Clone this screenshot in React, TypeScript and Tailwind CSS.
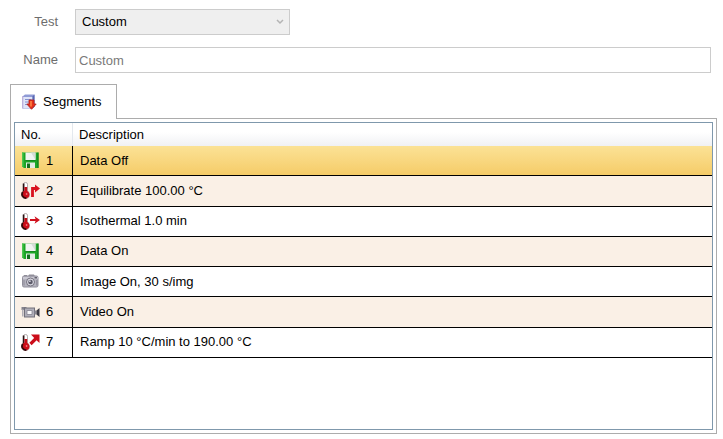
import { useState } from "react";

// ────────────────────────────────────────────
// Types
// ────────────────────────────────────────────

type SegmentKind =
  | "data"
  | "equilibrate"
  | "isothermal"
  | "image"
  | "video"
  | "ramp";

interface Segment {
  kind: SegmentKind;
  description: string;
}

const SEGMENTS: Segment[] = [
  { kind: "data", description: "Data Off" },
  { kind: "equilibrate", description: "Equilibrate 100.00 °C" },
  { kind: "isothermal", description: "Isothermal 1.0 min" },
  { kind: "data", description: "Data On" },
  { kind: "image", description: "Image On, 30 s/img" },
  { kind: "video", description: "Video On" },
  { kind: "ramp", description: "Ramp 10 °C/min to 190.00 °C" },
];

// ────────────────────────────────────────────
// Icons
// ────────────────────────────────────────────

function FloppyIcon() {
  return (
    <>
      <path d="M1 .5h16.500V16H3l-2-1.500z" fill="#1da526" />
      <path d="M1 .5h1.500v14.800L1 14.500z" fill="#4cc850" />
      <path d="M16.500.5h1V16h-1z" fill="#0c7a1b" />
      <path d="M4.500 .5h10v7.500h-10z" fill="#f1f4f1" />
      <path d="M10 .5h4.500V8z" fill="#d5dcd6" />
      <path d="M4.500 8.500h10" stroke="#14891f" />
      <path d="M5 10.500h9V16H5z" fill="#e3ebe4" />
      <path d="M6 11.500h3V16H6z" fill="#14721f" />
    </>
  );
}

function Thermometer() {
  return (
    <>
      <path
        d="M2.500 2.200a2 1.700 0 0 1 4 0v7a4 4 0 1 1-4 0z"
        fill="#fff"
        stroke="#a39a9b"
        strokeWidth=".8"
      />
      <path d="M2.600 1.500v9" stroke="#2b1213" strokeWidth="1.700" />
      <path d="M3.400 5h2.800v6H3.400z" fill="#c20d18" />
      <circle cx="4.600" cy="12.600" r="3.800" fill="#cb0d19" />
      <path
        d="M1.800 10a3.800 3.800 0 0 0 3.500 6"
        fill="none"
        stroke="#330a0c"
        strokeWidth="1.800"
      />
      <circle cx="5.600" cy="12" r=".9" fill="#f0727a" />
    </>
  );
}

function EquilibrateIcon() {
  return (
    <>
      <Thermometer />
      <path d="M11.500 15V6.500H15" fill="none" stroke="#d9121f" strokeWidth="2.800" />
      <path d="M14 2.500 19 6.500l-5 4z" fill="#d9121f" />
    </>
  );
}

function IsothermalIcon() {
  return (
    <>
      <Thermometer />
      <path d="M9 7h7" stroke="#d0101d" strokeWidth="2" />
      <path d="M13.500 3.200 19 7l-5.500 3.800L15 7z" fill="#d0101d" />
    </>
  );
}

function RampIcon() {
  return (
    <>
      <Thermometer />
      <path d="m9.500 10 6-6" stroke="#cb0d1a" strokeWidth="3.200" />
      <path d="M10 .5h8.500V9l-2.700-2.500-3-3z" fill="#cb0d1a" />
    </>
  );
}

function CameraIcon() {
  return (
    <>
      <path d="M3 2h3v1.500H3zM8 1.500h5l1 2H7z" fill="#908e98" />
      <rect x="1.500" y="3" width="15.500" height="11" rx="1.500" fill="#b4b3be" stroke="#918f9b" />
      <path d="M2 5h15" stroke="#dedde5" />
      <path d="M3 7v5.500M15.800 7v5.500" stroke="#8a8894" />
      <circle cx="9.500" cy="9" r="4" fill="#d8d7e0" stroke="#74727e" />
      <circle cx="9.500" cy="9" r="2.300" fill="#5c5b69" />
      <circle cx="8.900" cy="8.200" r=".9" fill="#d0cfda" />
      <path d="M13.500 4h2.500v1.500h-2.500z" fill="#63616d" />
    </>
  );
}

function VideoIcon() {
  return (
    <>
      <path d="M.5 3h5v1.500H3V6H.5z" fill="#85838d" />
      <path d="M1.800 5v7.500" stroke="#a5a3ad" strokeWidth="1.300" />
      <rect x="3.500" y="4" width="10" height="9" fill="#b0aeb9" stroke="#72707b" />
      <path d="M6 6.500h5v4H6z" fill="#faf9fb" stroke="#85838f" strokeWidth=".8" />
      <path d="M13.500 6.500h2v4h-2z" fill="#8a8894" />
      <path d="M15.500 6.500 18.500 4v9l-3-2.500z" fill="#3b3943" />
    </>
  );
}

const ICONS: Record<SegmentKind, () => React.ReactNode> = {
  data: FloppyIcon,
  equilibrate: EquilibrateIcon,
  isothermal: IsothermalIcon,
  image: CameraIcon,
  video: VideoIcon,
  ramp: RampIcon,
};

function SegmentIcon({ kind }: { kind: SegmentKind }) {
  const Drawing = ICONS[kind];
  return (
    <svg viewBox="0 0 19 17" className="h-[17px] w-[19px] shrink-0" aria-hidden="true">
      <Drawing />
    </svg>
  );
}

function SegmentsTabIcon() {
  return (
    <svg viewBox="0 0 16 16" className="size-4 shrink-0" aria-hidden="true">
      <path d="M1.500 2.500 4 .5h9.500v12l-2 2h-10z" fill="#8f9bd6" />
      <path d="M2 3h9.500v11H2z" fill="#dfe4f8" />
      <path d="M11.500 2.500 13.500.5v12l-2 2z" fill="#5868b4" />
      <path d="M4 5.500h6.500M4 8h4.500M4 10.500h3" stroke="#8491ce" />
      <path d="M1.800 2v12.500" stroke="#b7a6d4" />
      <path
        d="M8 6h5v4h2.200l-4.700 5.300L5.800 10H8z"
        fill="#e5301a"
        stroke="#b3201a"
        strokeWidth=".8"
      />
      <path d="M10 7v5.500" stroke="#ff8a45" strokeWidth="1.500" />
    </svg>
  );
}

// ────────────────────────────────────────────
// Test form
// ────────────────────────────────────────────

function TestForm() {
  return (
    <div className="grid grid-cols-[48px_1fr] items-center gap-x-[17px] gap-y-3 pr-1.5 text-[#6d6d6d]">
      <label htmlFor="test" className="text-right">
        Test
      </label>
      <div className="relative w-[215px]">
        <select
          id="test"
          disabled
          defaultValue="custom"
          className="block h-[26px] w-full appearance-none border border-[#cccccc] bg-[#efefef] px-1.5 text-black opacity-100"
        >
          <option value="custom">Custom</option>
        </select>
        <svg
          viewBox="0 0 8 6"
          className="pointer-events-none absolute top-2.5 right-1.5 h-1.5 w-2"
          aria-hidden="true"
        >
          <path d="m1 1 3 3 3-3" fill="none" stroke="#b4b4b4" strokeWidth="1.500" />
        </svg>
      </div>

      <label htmlFor="name" className="text-right">
        Name
      </label>
      <input
        id="name"
        type="text"
        disabled
        defaultValue="Custom"
        className="h-[26px] w-full border border-[#cccccc] bg-white px-[3px] text-[#7a7a7a]"
      />
    </div>
  );
}

// ────────────────────────────────────────────
// Segment table
// ────────────────────────────────────────────

function SegmentTable() {
  const [selected, setSelected] = useState(0);

  return (
    <table className="h-[235px] w-full table-fixed border-separate border-spacing-0">
      <thead>
        <tr className="h-[23px] bg-linear-to-b from-white from-40% to-[#f0f1f4] text-left">
          <th className="w-[58px] border-r border-[#e3e8ee] p-0 pl-1.5 font-normal">No.</th>
          <th className="p-0 pl-1.5 font-normal">Description</th>
        </tr>
      </thead>
      <tbody>
        {SEGMENTS.map((segment, i) => (
          <tr
            key={i}
            onClick={() => setSelected(i)}
            aria-selected={i === selected}
            className={
              i === selected
                ? "h-[30px] bg-linear-to-b from-[#fbe295] to-[#f5cb66]"
                : "h-[30px] bg-white even:bg-[#faf0e6]"
            }
          >
            <td className="border-r border-b border-black p-0 pl-1.5">
              <div className="flex items-center gap-1.5">
                <SegmentIcon kind={segment.kind} />
                {i + 1}
              </div>
            </td>
            <td className="border-b border-black p-0 pl-[7px]">{segment.description}</td>
          </tr>
        ))}
      </tbody>
    </table>
  );
}

export default function App() {
  return (
    <main className="flex min-h-screen flex-col bg-white px-1.5 pt-[9px] pb-[5px] pl-2.5 font-['Liberation_Sans',Arial,sans-serif] text-[13px] leading-4 text-black">
      <TestForm />

      <div role="tablist" className="mt-[11px] flex">
        <button
          type="button"
          role="tab"
          id="segments-tab"
          aria-selected="true"
          aria-controls="segments-panel"
          className="relative z-10 -mb-px flex h-[35px] w-[107px] items-center gap-1.5 border border-b-0 border-[#acacac] bg-white pl-2.5"
        >
          <SegmentsTabIcon />
          Segments
        </button>
      </div>

      <section
        id="segments-panel"
        role="tabpanel"
        aria-labelledby="segments-tab"
        className="flex flex-1 flex-col border border-[#acacac] p-[3px]"
      >
        <div className="flex-1 border border-[#7f98ac] bg-white">
          <SegmentTable />
        </div>
      </section>
    </main>
  );
}
